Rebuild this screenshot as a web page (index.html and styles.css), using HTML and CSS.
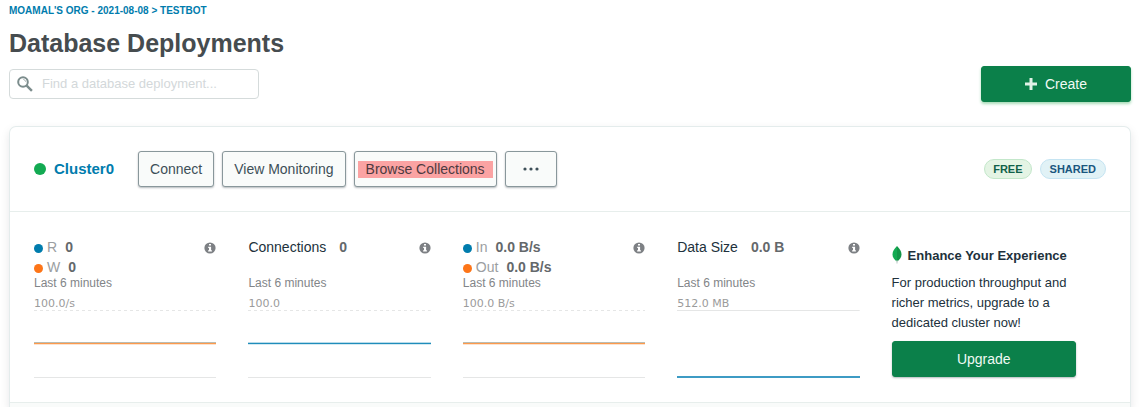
FILE: index.html
```html
<!DOCTYPE html>
<html lang="en">
<head>
<meta charset="utf-8">
<title>Database Deployments</title>
<link rel="stylesheet" href="styles.css">
</head>
<body>
<svg class="defs" aria-hidden="true">
  <symbol id="info" viewBox="0 0 12 12">
    <circle cx="6" cy="6" r="5.6" fill="#7d8084"/>
    <path d="M5 1.9h2v1.7H5zM4.2 4.7h2.9v3.6h.8v1.3H4.1V8.3H5V6h-.8z" fill="#fff"/>
  </symbol>
</svg>
<div class="page">
  <nav class="crumbs" aria-label="Breadcrumb"><a href="#">MOAMAL'S ORG - 2021-08-08</a> &gt; <a href="#">TESTBOT</a></nav>
  <h1 class="title">Database Deployments</h1>
  <div class="toolbar">
    <label class="search">
      <svg class="search-icon" viewBox="0 0 16 16" aria-hidden="true"><circle cx="6" cy="6" r="4.8" fill="none" stroke="#7b8c8c" stroke-width="2"/><path d="M9.7 9.7l5.200 5.200" stroke="#7b8c8c" stroke-width="2.4"/><path d="M6.3 3.4a2.700 2.700 0 0 1 2.300 2.300" fill="none" stroke="#a5b1b1"/></svg>
      <input class="search-input" type="text" aria-label="Find a database deployment" placeholder="Find a database deployment...">
    </label>
    <button class="btn primary create" type="button"><svg class="plus" viewBox="0 0 12 12" aria-hidden="true"><path d="M6 0v12M0 6h12" stroke="#e0f2e6" stroke-width="3"/></svg>Create</button>
  </div>
  <section class="card">
    <header class="card-head">
      <span class="status"></span>
      <a class="cluster" href="#">Cluster0</a>
      <div class="actions">
        <button class="btn" type="button">Connect</button>
        <button class="btn" type="button">View Monitoring</button>
        <button class="btn marked" type="button"><span class="label">Browse Collections</span></button>
        <button class="btn more" type="button" aria-label="More"><svg class="dots" viewBox="0 0 16 4" aria-hidden="true"><circle cx="2" cy="2" r="1.600"/><circle cx="8" cy="2" r="1.600"/><circle cx="14" cy="2" r="1.600"/></svg></button>
      </div>
      <span class="badge free">FREE</span>
      <span class="badge shared">SHARED</span>
    </header>
    <div class="metrics">
      <article class="metric">
        <svg class="info"><use href="#info"/></svg>
        <div class="legend">
          <p class="row"><i class="dot blue"></i><span class="key">R</span><b class="value">0</b></p>
          <p class="row"><i class="dot orange"></i><span class="key">W</span><b class="value">0</b></p>
        </div>
        <p class="period">Last 6 minutes</p>
        <p class="scale">100.0/s</p>
        <div class="chart"><div class="series both"></div></div>
      </article>
      <article class="metric">
        <svg class="info"><use href="#info"/></svg>
        <div class="legend">
          <p class="row"><span class="name">Connections</span><b class="value">0</b></p>
        </div>
        <p class="period">Last 6 minutes</p>
        <p class="scale">100.0</p>
        <div class="chart"><div class="series"></div></div>
      </article>
      <article class="metric">
        <svg class="info"><use href="#info"/></svg>
        <div class="legend">
          <p class="row"><i class="dot blue"></i><span class="key">In</span><b class="value">0.0 B/s</b></p>
          <p class="row"><i class="dot orange"></i><span class="key">Out</span><b class="value">0.0 B/s</b></p>
        </div>
        <p class="period">Last 6 minutes</p>
        <p class="scale">100.0 B/s</p>
        <div class="chart"><div class="series both"></div></div>
      </article>
      <article class="metric">
        <svg class="info"><use href="#info"/></svg>
        <div class="legend">
          <p class="row"><span class="name">Data Size</span><b class="value">0.0 B</b></p>
        </div>
        <p class="period">Last 6 minutes</p>
        <p class="scale">512.0 MB</p>
        <div class="chart floor"><div class="series"></div></div>
      </article>
      <aside class="promo">
        <h2 class="promo-title"><svg class="leaf" viewBox="0 0 10 18" aria-hidden="true"><path d="M5 0C2.500 2.500.5 5 .5 8.500c0 3 2 5.500 4.500 7z" fill="#13aa52"/><path d="M5 0c2.500 2.500 4.500 5 4.500 8.500 0 3-2 5.500-4.500 7z" fill="#129547"/><path d="M5 14v3.500" stroke="#b8c4c2"/></svg>Enhance Your Experience</h2>
        <p class="promo-text">For production throughput and richer metrics, upgrade to a dedicated cluster now!</p>
        <button class="btn primary upgrade" type="button">Upgrade</button>
      </aside>
    </div>
    <footer class="card-foot"></footer>
  </section>
</div>
</body>
</html>
```
FILE: styles.css
```css
* { box-sizing: border-box; }
body {
  margin: 0;
  background: #fff;
  color: #21313c;
  font: 14px/20px "Liberation Sans", Arial, sans-serif;
}
p, h1, h2 { margin: 0; }
a { color: inherit; text-decoration: none; }
.defs { display: none; }
.page { display: flex; flex-direction: column; min-height: 100vh; padding: 4px 12px 0 9px; }
.crumbs { color: #007cad; font-size: 10px; font-weight: bold; line-height: 14px; }
.title { margin-top: 8px; color: #464c4f; font-size: 25px; line-height: 34px; }
.toolbar { display: flex; justify-content: space-between; align-items: center; margin-top: 6px; }
.search {
  display: flex;
  align-items: center;
  gap: 9px;
  width: 250px;
  height: 30px;
  padding: 0 7px;
  border: 1px solid #d5dbdb;
  border-radius: 4px;
}
.search-icon { flex: none; width: 16px; height: 16px; }
.search-input { flex: 1; min-width: 0; padding: 0; border: 0; outline: 0; background: none; font: inherit; font-size: 13px; color: #464c4f; }
.search-input::placeholder { color: #d3d8da; opacity: 1; }
.btn {
  display: flex;
  align-items: center;
  justify-content: center;
  height: 36px;
  padding: 0 11px;
  border: 1px solid #89979b;
  border-radius: 3px;
  background: #f9fbfa;
  box-shadow: 0 1px 2px rgba(6, 22, 33, 0.3);
  color: #3d4f58;
  font: inherit;
  white-space: nowrap;
}
.primary { border-color: #0b804a; background: #0b804a; color: #f0faf4; }
.create { gap: 8px; width: 150px; box-shadow: 0 2px 3px #a9dcb9; }
.plus { width: 12px; height: 12px; }
.card {
  display: flex;
  flex: 1;
  flex-direction: column;
  margin-top: 24px;
  border: 1px solid #e4ecec;
  border-bottom: 0;
  border-radius: 7px 7px 0 0;
  box-shadow: 0 4px 10px rgba(6, 22, 33, 0.1);
}
.card-head {
  display: flex;
  align-items: center;
  gap: 8px;
  padding: 24px;
  border-bottom: 1px solid #e7eeec;
}
.status { width: 12px; height: 12px; border-radius: 50%; background: #13aa52; }
.cluster { color: #007cad; font-size: 15px; font-weight: bold; }
.actions { display: flex; gap: 8px; margin: 0 auto 0 16px; }
.marked { color: #4d3a40; }
.label { margin: 0 -8px; padding: 0 8px; background: #fba3a3; line-height: 17px; }
.more { width: 52px; }
.dots { width: 16px; height: 4px; fill: #3d4f58; }
.badge { padding: 0 9px; border: 1px solid; border-radius: 10px; font-size: 11px; font-weight: bold; line-height: 18px; }
.free { padding: 0 8px; border-color: #c3e7ca; background: #e4f4e4; color: #116149; }
.shared { border-color: #c5e4f2; background: #e1f2f6; color: #1a567e; }
.metrics { display: grid; grid-template-columns: repeat(5, 1fr); padding: 25px 24px 24px; }
.metric { position: relative; padding-right: 32px; }
.info { position: absolute; top: 5px; right: 32px; width: 12px; height: 12px; }
.legend { height: 40px; }
.row { display: flex; align-items: center; }
.dot { width: 9px; height: 9px; margin: 2px 4px 0 0; border-radius: 50%; }
.blue { background: #007cad; }
.orange { background: #fd7518; }
.key { margin-right: 8px; color: #9b9ea1; }
.name { margin-right: 13px; }
.value { color: #64686b; }
.period { color: #828588; font-size: 12px; line-height: 12px; }
.scale { margin-top: 8px; color: #9b9b9b; font: 11px/13px "DejaVu Sans", sans-serif; }
.chart {
  display: flex;
  flex-direction: column;
  justify-content: center;
  height: 68px;
  border-bottom: 1px solid #e5e6e6;
  background: repeating-linear-gradient(90deg, #e5e6e6 0 3px, transparent 3px 6px) top / 100% 1px no-repeat;
}
.series { height: 3px; border-top: 1px solid #b9dbe9; border-bottom: 1px solid #d4eaf2; background: #1f8dbb; }
.both { border-top-color: #b9bdb4; border-bottom-color: #fbe3d0; background: #fd9a4c; }
.floor { justify-content: flex-end; border-bottom: 0; background: linear-gradient(#e5e6e6, #e5e6e6) top / 100% 1px no-repeat; }
.floor .series { height: 2px; border-color: #3d9bc4; }
.promo { padding-right: 30px; }
.promo-title { display: flex; align-items: center; gap: 6px; margin-top: 9px; font-size: 13px; line-height: 20px; white-space: nowrap; }
.leaf { width: 10px; height: 18px; margin-bottom: 2px; }
.promo-text { margin: 7px 0 8px; font-size: 13px; }
.upgrade { width: 100%; }
.card-foot { flex: 1; border-top: 1px solid #e7eeec; background: #f9fbfa; }
```
